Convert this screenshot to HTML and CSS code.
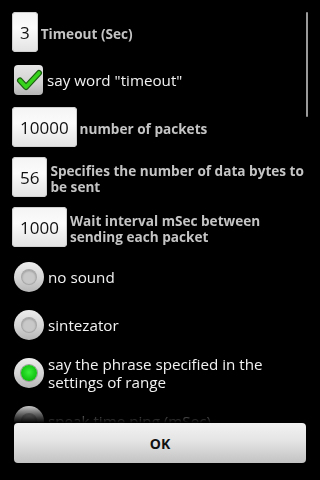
FILE: index.html
```html
<!DOCTYPE html>
<html lang="en">
<head>
    <meta charset="UTF-8">
    <meta name="viewport" content="width=device-width, initial-scale=1.0">
    <title>Ping settings</title>
    <link rel="stylesheet" href="styles.css">
</head>
<body>
    <div class="screen">
        <div class="list">
            <div class="edit-row">
                <div class="field">3</div>
                <div class="label">Timeout (Sec)</div>
            </div>

            <div class="check-row">
                <div class="checkbox">
                    <svg width="30" height="30" viewBox="0 0 30 30">
                        <path d="M6 15.5 L12 22 L25 8" fill="none" stroke="#1c5e12" stroke-width="6" stroke-linecap="round" stroke-linejoin="round"/>
                        <path d="M6 15.5 L12 22 L25 8" fill="none" stroke="#37d21c" stroke-width="3.6" stroke-linecap="round" stroke-linejoin="round"/>
                    </svg>
                </div>
                <div class="option-text">say word "timeout"</div>
            </div>

            <div class="edit-row">
                <div class="field">10000</div>
                <div class="label">number of packets</div>
            </div>

            <div class="edit-row">
                <div class="field">56</div>
                <div class="label">Specifies the number of data bytes to be sent</div>
            </div>

            <div class="edit-row">
                <div class="field">1000</div>
                <div class="label">Wait interval mSec between sending each packet</div>
            </div>

            <div class="radio-group">
                <div class="radio-row">
                    <div class="radio"><span class="dot"></span></div>
                    <div class="option-text">no sound</div>
                </div>
                <div class="radio-row">
                    <div class="radio"><span class="dot"></span></div>
                    <div class="option-text">sintezator</div>
                </div>
                <div class="radio-row">
                    <div class="radio"><span class="dot on"></span></div>
                    <div class="option-text">say the phrase specified in the settings of range</div>
                </div>
                <div class="radio-row">
                    <div class="radio"><span class="dot"></span></div>
                    <div class="option-text">speak time ping (mSec)</div>
                </div>
            </div>

            <div class="scrollbar"></div>
        </div>

        <div class="footer">
            <button class="ok-button">OK</button>
        </div>
    </div>
</body>
</html>
```

FILE: styles.css
```css
/* Basic styles */
body {
    margin: 0;
    padding: 0;
    background: #000;
    font-family: "Open Sans", "DejaVu Sans", sans-serif;
}
.screen {
    width: 320px;
    height: 480px;
    overflow: hidden;
    background: #000;
}
.list {
    position: relative;
    height: 423px;
    overflow: hidden;
    padding: 12px 10px 0 12px;
    box-sizing: border-box;
    -webkit-mask-image: linear-gradient(to bottom, #000 calc(100% - 20px), transparent);
    mask-image: linear-gradient(to bottom, #000 calc(100% - 20px), transparent);
}
.scrollbar {
    position: absolute;
    top: 12px;
    right: 12px;
    width: 2px;
    height: 105px;
    border-radius: 1px;
    background: #9a9a9a;
}

/* edit text rows */
.edit-row {
    display: flex;
    align-items: center;
    min-height: 40px;
    margin-bottom: 10px;
}
.field {
    height: 40px;
    padding: 0 8px;
    box-sizing: border-box;
    display: flex;
    align-items: center;
    border-radius: 4px;
    background: linear-gradient(to bottom, #f4f4f4, #fbfbfb 40%, #e2e2e2);
    box-shadow: inset 0 0 0 1px #d0d0d0;
    color: #111;
    font-size: 17px;
    flex-shrink: 0;
}
.label {
    padding-left: 3px;
    padding-top: 4px;
    color: #c4c4c4;
    font-size: 13.6px;
    font-weight: bold;
    line-height: 16px;
}

/* checkbox */
.check-row {
    display: flex;
    align-items: center;
    height: 48px;
    margin: -6px 0 3px 2px;
}
.checkbox {
    width: 29px;
    height: 30px;
    border-radius: 4px;
    background: linear-gradient(to bottom, #e6e6e6, #d2d2d2 60%, #b4b4b4);
    flex-shrink: 0;
}
.checkbox svg {
    display: block;
}
.option-text {
    padding-left: 4px;
    color: #f2f2f2;
    font-size: 15.2px;
    line-height: 18px;
}

/* radio buttons */
.radio-group {
    margin-top: -4px;
    margin-left: 2px;
}
.radio-row {
    display: flex;
    align-items: center;
    height: 48px;
}
.radio {
    width: 30px;
    height: 30px;
    border-radius: 50%;
    background: linear-gradient(to bottom, #ececec, #d4d4d4 55%, #b6b6b6);
    display: flex;
    align-items: center;
    justify-content: center;
    flex-shrink: 0;
}
.dot {
    width: 14px;
    height: 14px;
    border-radius: 50%;
    background: #c9c9c9;
    box-shadow: 0 0 0 1px #a8a8a8, inset 0 1px 2px #9c9c9c;
}
.dot.on {
    width: 16px;
    height: 16px;
    background: radial-gradient(circle at 50% 45%, #3bf03b, #10c010 70%, #0a9a0a);
    box-shadow: 0 0 0 1px #9a9a9a;
}

/* footer */
.footer {
    padding: 0 14px;
}
.ok-button {
    display: block;
    width: 100%;
    height: 40px;
    border: none;
    border-radius: 4px;
    background: linear-gradient(to bottom, #f2f2f2, #e4e4e4 45%, #c2c2c2);
    color: #111;
    font-family: "Open Sans", "DejaVu Sans", sans-serif;
    font-size: 14px;
    font-weight: bold;
    cursor: pointer;
}
```
